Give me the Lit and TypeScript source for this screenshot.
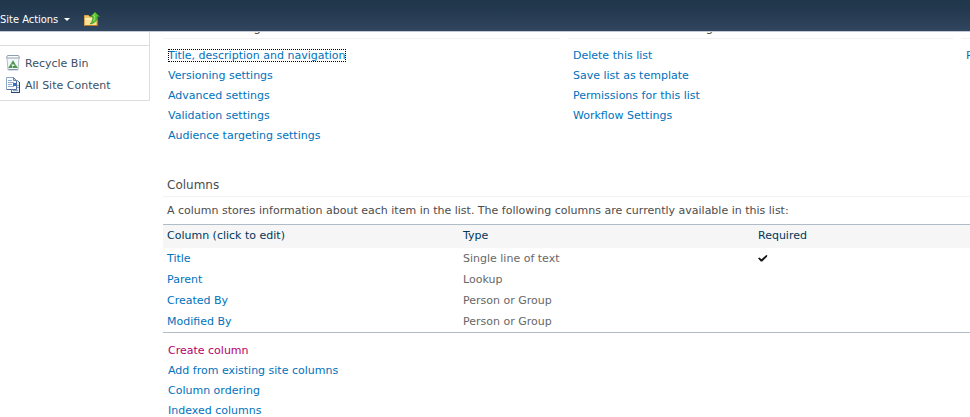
import { LitElement, html, css, svg } from "lit";
import { customElement, property } from "lit/decorators.js";
import { classMap } from "lit/directives/class-map.js";

interface LinkItem {
  label: string;
  state?: "focused" | "active";
}

const generalLinks: LinkItem[] = [
  { label: "Title, description and navigation", state: "focused" },
  { label: "Versioning settings" },
  { label: "Advanced settings" },
  { label: "Validation settings" },
  { label: "Audience targeting settings" },
];

const managementLinks: LinkItem[] = [
  { label: "Delete this list" },
  { label: "Save list as template" },
  { label: "Permissions for this list" },
  { label: "Workflow Settings" },
];

const columnLinks: LinkItem[] = [
  { label: "Create column", state: "active" },
  { label: "Add from existing site columns" },
  { label: "Column ordering" },
  { label: "Indexed columns" },
];

const columns = [
  { name: "Title", type: "Single line of text", required: true },
  { name: "Parent", type: "Lookup", required: false },
  { name: "Created By", type: "Person or Group", required: false },
  { name: "Modified By", type: "Person or Group", required: false },
];

const folderUpIcon = svg`<svg width="16" height="16" viewBox="0 0 16 16" aria-hidden="true">
  <path d="M.5 4.500h4l1 1h7.500v9H.5z" fill="#f0c566" stroke="#dca548"/>
  <path d="M1 7h11v7H1z" fill="#fbdf98"/>
  <path d="M1 7h9v2H1z" fill="#fdedbd"/>
  <path d="M1 14.500h12.500V9" fill="none" stroke="#b87820"/>
  <path d="M11 1.200l4.500 4.300h-2.300c.2 3.800-2 6.600-7 7.400 2.200-2 2.800-4.200 2.600-7.400H6.500z" fill="#5cc336" stroke="#2f9422" stroke-width=".8"/>
  <path d="M11 2.500L9 4.900h1.500c.1 2.500-.2 4-1 5.200" fill="none" stroke="#98e468"/>
</svg>`;

const recycleIcon = svg`<svg width="16" height="16" viewBox="0 0 16 16" aria-hidden="true">
  <path d="M1 3h12l-1 12H2z" fill="#f4f7f9" stroke="#b3bdc8"/>
  <path d="M1.500.5h11l1 2.500H.5z" fill="#fff" stroke="#919eac"/>
  <path d="M1 3.500h12" stroke="#c5ced7"/>
  <path d="M2.500 14.500h9" stroke="#8593a8"/>
  <path d="M7 7l3.200 5H3.800z" fill="none" stroke="#4c9651" stroke-width="1.800"/>
  <path d="M5.200 8.800l1.300.8M9.600 9.800l-1.400.6M6.500 13v-1.800" stroke="#c3e4c3" stroke-width=".8"/>
</svg>`;

const documentsIcon = svg`<svg width="16" height="16" viewBox="0 0 16 16" aria-hidden="true">
  <path d="M5.500 3.500h6l2 2v10h-8z" fill="#e6eef8" stroke="#5b79a6"/>
  <path d="M13.500 5v10.500H5" fill="none" stroke="#2b4065"/>
  <path d="M10 8.500h3M10 10.500h3M7 13.500h5" stroke="#8ba6cc"/>
  <path d="M.5.500h7l3 3v9H.5z" fill="#fafcfe" stroke="#8fa6c6"/>
  <path d="M7.500.500v3h3z" fill="#c9d9ec" stroke="#6583ae"/>
  <path d="M10.500 4v8.500H1" fill="none" stroke="#536f9a"/>
  <path d="M2 3.500h4M2 5.500h6M2 7.500h4M2 9.500h6" stroke="#93aacb"/>
  <path d="M7 6h3v3H7z" fill="#2b72cc"/>
</svg>`;

const checkIcon = svg`<svg class="check" width="10" height="9" viewBox="0 0 10 9" role="img" aria-label="Required">
  <path d="M0 4.200L1.500 3.600 3.500 5.200 8.300 1 9.400 1.400 9 2.700 4.200 7.600 2.800 7.600z" fill="#151515"/>
</svg>`;

@customElement("link-list")
export class LinkList extends LitElement {
  @property({ attribute: false }) items: LinkItem[] = [];

  static styles = css`
    :host {
      display: block;
    }
    .list {
      list-style: none;
      margin: 0;
      padding: 0 0 0 5px;
    }
    .item {
      display: flex;
      align-items: center;
      height: 20px;
      white-space: nowrap;
    }
    .link {
      color: #0072bc;
      line-height: 13px;
      text-decoration: none;
    }
    .link:hover {
      text-decoration: underline;
    }
    .active {
      color: #b5006b;
    }
    .focused {
      outline: 1px dotted #000;
      outline-offset: -1px;
    }
  `;

  render() {
    return html`<ul class="list">
      ${this.items.map(
        (item) => html`<li class="item">
          <a
            href="#"
            class=${classMap({
              link: true,
              active: item.state === "active",
              focused: item.state === "focused",
            })}
            >${item.label}</a
          >
        </li>`
      )}
    </ul>`;
  }
}

@customElement("app-root")
export class AppRoot extends LitElement {
  static styles = css`
    :host {
      display: flex;
      flex-direction: column;
      height: 100vh;
      overflow: hidden;
      background: #fff;
      color: #4c4c4c;
      font-family: "DejaVu Sans", Verdana, sans-serif;
      font-size: 11px;
    }
    .ribbon {
      flex: none;
      display: flex;
      align-items: center;
      gap: 14px;
      height: 24px;
      padding-top: 7px;
      background: linear-gradient(#21374c, #21374c 20%, #31465f);
      border-bottom: 1px solid #c3cad6;
    }
    .menu,
    .up {
      display: flex;
      align-items: center;
      padding: 0;
      border: 0;
      background: none;
      color: #fff;
    }
    .menu {
      gap: 6px;
      font: 11px "DejaVu Sans Condensed", Tahoma, sans-serif;
    }
    .arrow {
      border: 3px solid transparent;
      border-top-color: #fff;
      border-bottom: 0;
    }
    .body {
      flex: 1;
      min-height: 0;
      display: flex;
      gap: 13px;
      align-items: flex-start;
      overflow: hidden;
    }
    .sidebar {
      flex: none;
      box-sizing: border-box;
      width: 150px;
      padding-top: 13px;
      border: solid #dbddde;
      border-width: 0 1px 1px 0;
    }
    .nav {
      padding: 6px 0 4px 6px;
      border-top: 1px solid #dbddde;
    }
    .nav-link {
      display: flex;
      align-items: center;
      gap: 3px;
      height: 22px;
      color: #3b4f65;
      text-decoration: none;
    }
    .main {
      flex: 1;
      min-width: 0;
    }
    .groups {
      display: grid;
      grid-template-columns: minmax(0, 397fr) minmax(0, 385fr) minmax(0, 9fr);
      gap: 8px;
      margin-top: -14px;
    }
    .group {
      overflow: hidden;
    }
    .heading {
      margin: 0;
      height: 20px;
      padding-left: 4px;
      border-bottom: 1px solid #f2f2f2;
      font-size: 12px;
      font-weight: 400;
      line-height: 18px;
      white-space: nowrap;
    }
    .group link-list {
      margin-top: 6px;
    }
    .columns {
      margin-top: 31px;
    }
    .intro {
      margin: 0;
      padding-left: 4px;
      line-height: 27px;
    }
    .table {
      width: 100%;
      table-layout: fixed;
      border-collapse: separate;
      border-spacing: 0;
      border: solid #b0bcc8;
      border-width: 1px 0;
      color: #676767;
    }
    .name-col {
      width: 296px;
    }
    .type-col {
      width: 295px;
    }
    .th,
    .td {
      padding: 0 0 0 4px;
      text-align: left;
      font-weight: 400;
    }
    .td {
      height: 21px;
    }
    .th {
      height: 21px;
      padding-bottom: 2px;
      background: #f6f6f6;
      color: #003759;
    }
    .name {
      color: #0072bc;
      text-decoration: none;
    }
    .check {
      display: block;
    }
    .actions {
      margin-top: 7px;
    }
  `;

  render() {
    return html`
      <header class="ribbon">
        <button class="menu" type="button">
          Site Actions <span class="arrow"></span>
        </button>
        <button class="up" type="button" aria-label="Navigate up">${folderUpIcon}</button>
      </header>
      <div class="body">
        <aside class="sidebar">
          <nav class="nav">
            <a class="nav-link" href="#">${recycleIcon}Recycle Bin</a>
            <a class="nav-link" href="#">${documentsIcon}All Site Content</a>
          </nav>
        </aside>
        <main class="main">
          <div class="groups">
            <section class="group">
              <h2 class="heading">General Settings</h2>
              <link-list .items=${generalLinks}></link-list>
            </section>
            <section class="group">
              <h2 class="heading">Permissions and Management</h2>
              <link-list .items=${managementLinks}></link-list>
            </section>
            <section class="group">
              <h2 class="heading">Communications</h2>
              <link-list .items=${[{ label: "RSS settings" }]}></link-list>
            </section>
          </div>
          <section class="columns">
            <h2 class="heading">Columns</h2>
            <p class="intro">
              A column stores information about each item in the list. The following columns are
              currently available in this list:
            </p>
            <table class="table">
              <colgroup>
                <col class="name-col" />
                <col class="type-col" />
                <col />
              </colgroup>
              <thead>
                <tr>
                  <th class="th" scope="col">Column (click to edit)</th>
                  <th class="th" scope="col">Type</th>
                  <th class="th" scope="col">Required</th>
                </tr>
              </thead>
              <tbody>
                ${columns.map(
                  (column) => html`<tr>
                    <td class="td"><a class="name" href="#">${column.name}</a></td>
                    <td class="td">${column.type}</td>
                    <td class="td">${column.required ? checkIcon : null}</td>
                  </tr>`
                )}
              </tbody>
            </table>
            <link-list class="actions" .items=${columnLinks}></link-list>
          </section>
        </main>
      </div>
    `;
  }
}
